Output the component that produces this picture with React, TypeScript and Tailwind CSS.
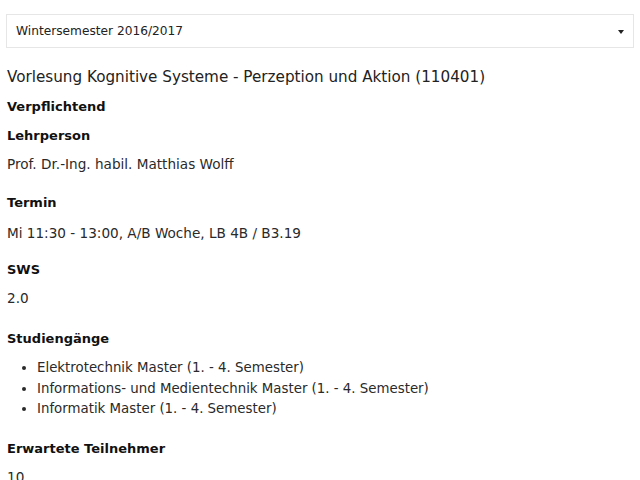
const FONT = "font-['DejaVu_Sans','Verdana','Liberation_Sans',sans-serif]";

const STUDIENGAENGE = [
  "Elektrotechnik Master (1. - 4. Semester)",
  "Informations- und Medientechnik Master (1. - 4. Semester)",
  "Informatik Master (1. - 4. Semester)",
];

function Label({ children }: { children: React.ReactNode }) {
  return <h4 className="text-[13px] leading-5 font-bold text-[#111]">{children}</h4>;
}

function Value({ children, gap = "mt-2" }: { children: React.ReactNode; gap?: string }) {
  return <p className={`${gap} text-[13.6px] leading-5 text-[#2a2a2a]`}>{children}</p>;
}

export default function App() {
  return (
    <div className={`${FONT} w-[640px] h-[480px] overflow-hidden bg-white`}>
      <div className="mx-[6px] mt-[14px] flex h-[34px] items-center justify-between border border-[#e6e6e6] bg-white pl-[9px] pr-[9px]">
        <span className="text-[12.2px] text-[#222]">Wintersemester 2016/2017</span>
        <span className="mt-[2px] h-0 w-0 border-x-[3px] border-t-[4px] border-x-transparent border-t-[#222]" />
      </div>

      <div className="px-[7px]">
        <h3 className="mt-[19px] text-[15.2px] leading-5 text-[#222]">
          Vorlesung Kognitive Systeme - Perzeption und Aktion (110401)
        </h3>
        <div className="mt-[10px]">
          <Label>Verpflichtend</Label>
        </div>

        <div className="mt-[9px]">
          <Label>Lehrperson</Label>
          <Value>Prof. Dr.-Ing. habil. Matthias Wolff</Value>
        </div>

        <div className="mt-[19px]">
          <Label>Termin</Label>
          <Value gap="mt-[10px]">Mi 11:30 - 13:00, A/B Woche, LB 4B / B3.19</Value>
        </div>

        <div className="mt-[17px]">
          <Label>SWS</Label>
          <Value>2.0</Value>
        </div>

        <div className="mt-[21px]">
          <Label>Studiengänge</Label>
          <ul className="mt-[9px] list-disc pl-[30px] text-[13.35px] leading-[20.5px] text-[#2a2a2a]">
            {STUDIENGAENGE.map((s) => (
              <li key={s}>{s}</li>
            ))}
          </ul>
        </div>

        <div className="mt-[19px]">
          <Label>Erwartete Teilnehmer</Label>
          <Value>10</Value>
        </div>
      </div>
    </div>
  );
}
